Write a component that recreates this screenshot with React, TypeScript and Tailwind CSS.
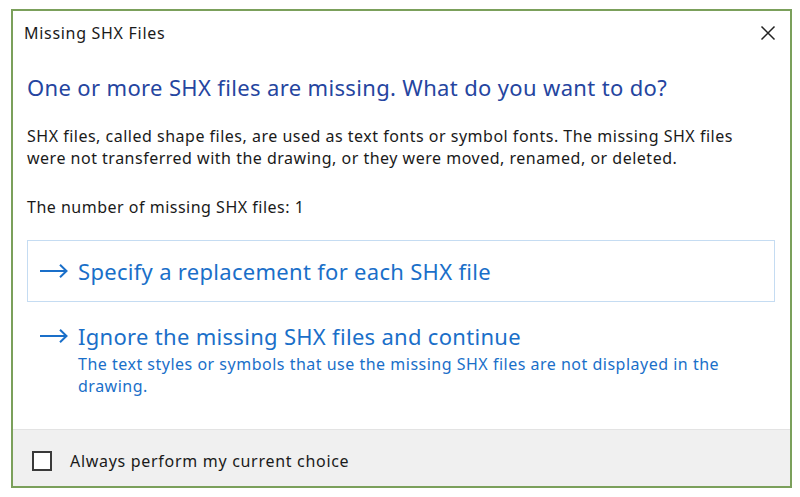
export default function App() {
  const font = { fontFamily: '"Noto Sans", "Open Sans", sans-serif' };
  return (
    <div className="w-[800px] h-[497px] bg-white pt-[9px] pl-[11px]" style={font}>
      <div className="w-[781px] h-[479px] border-2 border-[#7ba05b] flex flex-col bg-white">
        <div className="flex items-center justify-between h-[42px] pl-[11px] pr-[14px]">
          <span className="text-[16px] tracking-[0.7px] text-[#1a1a1a] mt-[2px]">Missing SHX Files</span>
          <svg width="16" height="16" viewBox="0 0 16 16" className="mt-[2px]">
            <path d="M1.5 1.5 L14.5 14.5 M14.5 1.5 L1.5 14.5" stroke="#222" strokeWidth="1.5" />
          </svg>
        </div>
        <div className="flex-1 pl-[14px] pr-[15px]">
          <h1 className="text-[22px] tracking-[0.35px] text-[#2545a0] mt-[20px] leading-[28px]">
            One or more SHX files are missing. What do you want to do?
          </h1>
          <p className="text-[16px] tracking-[0.5px] text-[#1a1a1a] leading-[22px] mt-[24px]">
            SHX files, called shape files, are used as text fonts or symbol fonts. The missing SHX files
            <br />
            were not transferred with the drawing, or they were moved, renamed, or deleted.
          </p>
          <p className="text-[16px] tracking-[0.5px] text-[#1a1a1a] leading-[22px] mt-[27px]">
            The number of missing SHX files: 1
          </p>
          <div className="mt-[22px] w-[748px] h-[62px] border border-[#c5dcf2] flex items-center pl-[12px]">
            <Arrow />
            <span className="text-[22px] tracking-[0.3px] text-[#1a6fc9] ml-[10px]">Specify a replacement for each SHX file</span>
          </div>
          <div className="mt-[19px] pl-[13px]">
            <div className="flex items-center">
              <Arrow />
              <span className="text-[22px] tracking-[0.3px] text-[#1a6fc9] ml-[10px] leading-[30px]">
                Ignore the missing SHX files and continue
              </span>
            </div>
            <p className="text-[16px] tracking-[0.5px] text-[#1a6fc9] leading-[22px] pl-[38px] mt-[2px]">
              The text styles or symbols that use the missing SHX files are not displayed in the
              <br />
              drawing.
            </p>
          </div>
        </div>
        <div className="h-[57px] bg-[#f0f0f0] border-t border-[#e3e3e3] flex items-center pl-[19px] pt-[5px]">
          <div className="w-[20px] h-[20px] border-2 border-[#3a3a3a] bg-white" />
          <span className="text-[16px] tracking-[0.7px] text-[#1a1a1a] ml-[18px]">Always perform my current choice</span>
        </div>
      </div>
    </div>
  );
}

function Arrow() {
  return (
    <svg width="28" height="14" viewBox="0 0 28 14">
      <path d="M0 7 H26.5 M20 0.8 L26.5 7 L20 13.2" stroke="#1a6fc9" strokeWidth="2" fill="none" />
    </svg>
  );
}
